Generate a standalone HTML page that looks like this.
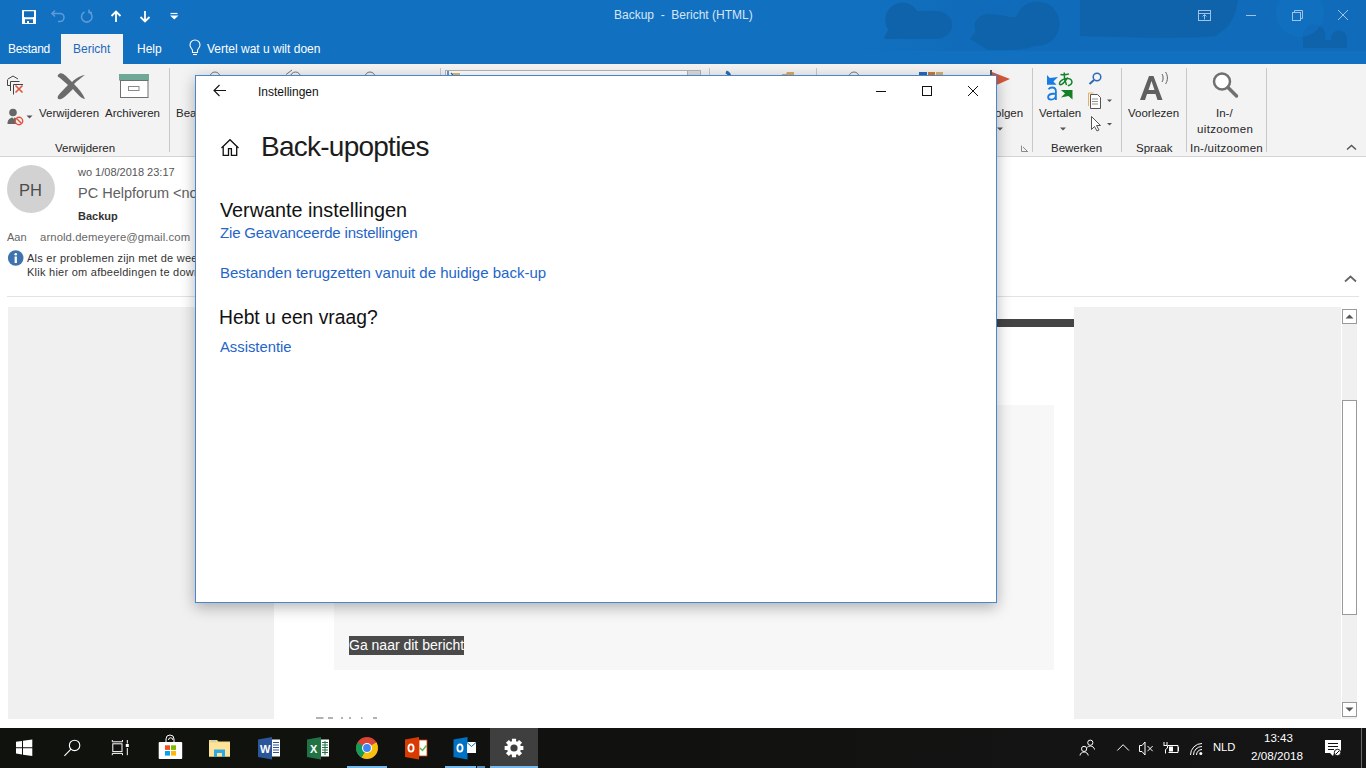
<!DOCTYPE html>
<html><head><meta charset="utf-8">
<style>
*{margin:0;padding:0;box-sizing:border-box}
html,body{width:1366px;height:768px;overflow:hidden;background:#fff;font-family:"Liberation Sans",sans-serif;position:relative}
.a{position:absolute;white-space:nowrap}
#title{left:0;top:0;width:1366px;height:64px;background:#1170c0}
#ribbon{left:0;top:64px;width:1366px;height:93px;background:#f3f3f3;border-bottom:1px solid #d5d5d5}
#hdr{left:0;top:157px;width:1366px;height:150px;background:#fff}
#body{left:8px;top:307px;width:1333px;height:412px;background:#f0f0f0}
#task{left:0;top:728px;width:1366px;height:40px;background:linear-gradient(90deg,#10120d 0%,#111210 50%,#151515 100%)}
#dlg{left:195px;top:75px;width:802px;height:528px;background:#fff;border:1px solid #4a86d0;box-shadow:0 4px 14px rgba(0,0,0,.3)}
.wt{color:#fff;font-size:12px}
.rt{color:#262626;font-size:12px}
</style></head><body>
<div id="title" class="a">
  <svg class="a" style="left:0;top:0" width="1366" height="64">
  <defs><linearGradient id="bandg" x1="0" x2="1"><stop offset="0" stop-color="#1170c0" stop-opacity="0"/><stop offset=".25" stop-color="#106cba" stop-opacity="1"/></linearGradient></defs>
  <rect x="820" y="0" width="546" height="51" fill="url(#bandg)"/>
  <g fill="#0f63ab">
   <circle cx="902.4" cy="19.8" r="17.2"/><ellipse cx="935.3" cy="25" rx="17" ry="14"/><path d="M902 11h33v28h-49l-2 -1 3-6z"/>
   <ellipse cx="988" cy="26.4" rx="13.5" ry="12.5"/><circle cx="1037.3" cy="23.7" r="22.3"/><path d="M988 15c8-1 14 0 22 2l27 0v28c-10 5-20 5-49 5l-18-11z"/>
   <path d="M1080 0h158c-2 14-6 22-12 28l-10 8c-30 3-70 2-136 0z"/>
   <circle cx="1314" cy="36" r="11.5"/><circle cx="1339" cy="38.5" r="8"/><path d="M1303 40h44v8h-44z"/>
  </g>
  <circle cx="1300" cy="13" r="24" fill="#1271c4" opacity=".6"/>
 </svg>
<svg class="a" style="left:0;top:0" width="200" height="30">
  <rect x="22" y="10" width="14" height="14" rx=".5" fill="#fff"/>
  <path d="M24 11.2h10v5l-1 1h-8l-1-1z" fill="#106cbc"/>
  <path d="M25 19.2h8V23h-4v-2h-2v2h-2z" fill="#106cbc"/>
  <g fill="none" stroke="#5b9bd8" stroke-width="1.6">
   <path d="M52 13.5h8a4 4 0 0 1 0 8h-2M55 10.5l-3 3 3 3"/>
   <path d="M89 12a5.3 5.3 0 1 1-4.5 0M89 9.5v3h3"/>
  </g>
  <g fill="none" stroke="#fff" stroke-width="1.8">
   <path d="M116 22V11.5M111.5 16l4.5-4.5 4.5 4.5"/>
   <path d="M145 11v10.5M140.5 17l4.5 4.5 4.5-4.5"/>
  </g>
  <path d="M170.5 13.5h7" stroke="#fff" stroke-width="1.2"/>
  <path d="M170 15.5h8.5l-4.25 4z" fill="#fff"/>
 </svg>
 <div class="a" style="left:614px;top:8px;font-size:12px;color:#d6e6f6">Backup&nbsp; -&nbsp; Bericht (HTML)</div>
 <svg class="a" style="left:1190px;top:0" width="176" height="32">
  <g fill="none" stroke="#9fc2e6" stroke-width="1">
   <rect x="8.5" y="10.5" width="12" height="10"/><path d="M8.5 13.5h12M14.5 19.5v-5M12.5 16.5l2-2 2 2"/>
   <path d="M56 15.5h10"/>
   <rect x="102.5" y="12.5" width="8" height="8"/><path d="M104.5 12.5v-2h8v8h-2"/>
   <path d="M148 10l10 10M158 10l-10 10"/>
  </g>
 </svg>
 <div class="a" style="left:61px;top:34px;width:62px;height:30px;background:#f3f3f3"></div>
 <div class="a wt" style="left:8px;top:42px;letter-spacing:-.3px">Bestand</div>
 <div class="a" style="left:73px;top:42px;font-size:12px;color:#1d69b8">Bericht</div>
 <div class="a wt" style="left:137px;top:42px">Help</div>
 <svg class="a" style="left:186px;top:39px" width="18" height="18"><g fill="none" stroke="#fff" stroke-width="1.1"><path d="M6.5 13.5v-2c0-1.5-2.5-3-2.5-5.5a5 5 0 0 1 10 0c0 2.5-2.5 4-2.5 5.5v2z"/><path d="M7 15.5h4"/></g></svg>
 <div class="a wt" style="left:207px;top:42px">Vertel wat u wilt doen</div>
</div>
<div id="ribbon" class="a">
 <svg class="a" style="left:0;top:0" width="1366" height="93">
  <g stroke="#c8c8c8" stroke-width="1"><path d="M169.5 4v84M440.5 4v12M709.5 4v12M816.5 4v12M1032.5 4v84M1121.5 4v84M1186.5 4v84M1266.5 4v84"/></g>
  <!-- ignore -->
  <g fill="none" stroke="#444" stroke-width="1"><path d="M7.5 15.5v6h3M8 15l5-3 5 3M10.5 27v-9.5h9M13.5 30.5v-10h9.5"/></g>
  <path d="M15.5 21.5l7 7M22.5 21.5l-7 7" stroke="#e0533c" stroke-width="1.6"/>
  <!-- junk -->
  <circle cx="13" cy="48.5" r="3.8" fill="#666"/>
  <path d="M7.5 60c0-4 2-6 5-6.5l1 1.5 1-1.5c2 .5 3 1 3.5 2l-1.5 4.5z" fill="#666"/>
  <circle cx="19" cy="57" r="3.7" fill="#f3f3f3" stroke="#e0533c" stroke-width="1.4"/>
  <path d="M16.5 54.5l5 5" stroke="#e0533c" stroke-width="1.4"/>
  <path d="M26.5 51.5h6l-3 3z" fill="#555"/>
  <!-- big X -->
  <path d="M58 11c2-3 5-2 8 1l6 6c4-4 10-7 13-7-3 2-8 6-11 9 5 5 9 10 11 15-3 0-7-4-12-10-5 5-9 9-12 10-3 1-4-1-3-3 2-3 6-7 10-11l-8-7c-2-1-3-2-2-3z" fill="#6b6b6b"/>
  <!-- archive -->
  <rect x="119" y="10" width="30" height="6.5" fill="#70a898"/>
  <rect x="120.5" y="16.5" width="27.5" height="17" fill="#fff" stroke="#707070" stroke-width="1"/>
  <rect x="128.5" y="22.5" width="10.5" height="4" fill="none" stroke="#8a8a8a" stroke-width="1"/>
  <!-- top strip hints -->
  <path d="M210 13a5 5 0 0 1 10 0M290.5 13a5 5 0 0 1 10 0M286 10.5l6-4.5M365 13a5 5 0 0 1 10 0M571 12a4 4 0 0 1 8 0M849 13a5 5 0 0 1 10 0" fill="none" stroke="#777" stroke-width="1"/>
  <rect x="445.5" y="6.5" width="242" height="10" fill="#fff" stroke="#b4b4b4"/>
  <rect x="687.5" y="6.5" width="13" height="10" fill="#dcdcdc" stroke="#b4b4b4"/>
  <path d="M448 7v5M451 9l3 3" stroke="#2a6ab8" stroke-width="1.4"/><rect x="453" y="9" width="7" height="5" fill="#e8b860"/>
  <path d="M726 8c3 1 4 3 4 6" stroke="#2a6ab8" stroke-width="3" fill="none"/>
  <rect x="749" y="12" width="10" height="4" fill="#e8b860"/>
  <path d="M782 10h4l1-2h7v8h-12z" fill="#dca860"/>
  <rect x="919" y="8" width="8" height="6" fill="#2a6ab8"/><rect x="928" y="8" width="7" height="6" fill="#d07a30"/><rect x="936" y="8" width="7" height="6" fill="#d6b070"/>
  <!-- flag -->
  <path d="M992 8l18 7-18 8z" fill="#d2593a"/>
  <rect x="990" y="6" width="2" height="6" fill="#555"/>
  <path d="M997 63.5h6l-3 3z" fill="#555"/>
  <path d="M1021.5 81.5v6h6M1023 83l5 5" fill="none" stroke="#8a8a8a" stroke-width="1"/>
  <!-- translate -->
  <path d="M1047 11l2.8 3 8.2-.9-4.6 4.4 3.2 3.2H1047z" fill="#1a7be0"/>
  <path d="M1048.5 25.3c1-1.3 2.3-1.8 3.6-1.8 2.5 0 3.8 1.3 3.8 3.8v8.6M1055.9 29.5c-4.5 0-7.8.8-7.8 3.5 0 1.6 1.2 2.6 3 2.6 2.5 0 4.8-1.8 4.8-4.5" fill="none" stroke="#1a7be0" stroke-width="1.8"/>
  <g fill="none" stroke="#138028" stroke-width="1.5"><path d="M1060.5 10.5c3 .4 6 .2 8.5-.6M1064.2 8.5c-.2 4 .5 8.5 2.3 12.5"/><path d="M1067.7 13.5c-2.5 3.8-5.3 7.2-7.2 7.2-1.5 0-1.3-2.5.7-4 2.5-2 6.5-2.8 9-1.5 2 1 2.3 3.5.8 5-.8.8-2 1.3-3.2 1.6"/></g>
  <path d="M1061 26h11.5v9.5l-4-3.5-7.5 1.5 4-4z" fill="#138028"/>
  <path d="M1060 63.5h6l-3 3z" fill="#555"/>
  <!-- small icons -->
  <circle cx="1097" cy="13" r="3.8" fill="none" stroke="#2a6ab8" stroke-width="1.5"/>
  <path d="M1094 16l-4.5 4" stroke="#2a6ab8" stroke-width="2"/>
  <path d="M1088.5 42v-13h5" fill="none" stroke="#e8b060" stroke-width="1"/>
  <path d="M1090.5 44.5v-14h7l3 3v11z" fill="#fff" stroke="#555" stroke-width="1"/>
  <path d="M1092 35h6M1092 37.5h6M1092 40h6" stroke="#777" stroke-width=".8"/>
  <path d="M1107 35.5h5l-2.5 2.5z" fill="#555"/>
  <path d="M1091.5 52.5v13l3-3 2.5 4.5 2-1-2.5-4.5h4z" fill="#fff" stroke="#555" stroke-width="1"/>
  <path d="M1107 59h5l-2.5 2.5z" fill="#555"/>
  <!-- A -->
  <path d="M1140 36l9-24h4.5l9 24h-5l-2-6h-8.5l-2 6zM1148.5 26h6l-3-9z" fill="#606060" fill-rule="evenodd"/>
  <path d="M1162 10c1.5 2 1.5 6 0 8M1165.5 8c2.5 3 2.5 9 0 12" fill="none" stroke="#606060" stroke-width="1"/>
  <!-- zoom -->
  <circle cx="1222" cy="17.5" r="8" fill="#fff" stroke="#707070" stroke-width="2.5"/>
  <path d="M1228 23.5l8.5 8.5" stroke="#707070" stroke-width="3.5" stroke-linecap="round"/>
  <path d="M1347 85.5l4.5-4 4.5 4" fill="none" stroke="#555" stroke-width="1.5"/>
 </svg>
 <div class="a rt" style="left:39px;top:43px;font-size:11.5px">Verwijderen</div>
 <div class="a rt" style="left:105px;top:43px;font-size:11.5px">Archiveren</div>
 <div class="a rt" style="left:176px;top:43px;font-size:11.5px">Bea</div>
 <div class="a rt" style="left:55px;top:78px;font-size:11.5px">Verwijderen</div>
 <div class="a rt" style="left:995px;top:43px;font-size:11.5px">olgen</div>
 <div class="a rt" style="left:1039px;top:43px;font-size:11.5px">Vertalen</div>
 <div class="a rt" style="left:1051px;top:78px;font-size:11.5px">Bewerken</div>
 <div class="a rt" style="left:1128px;top:43px;font-size:11.5px">Voorlezen</div>
 <div class="a rt" style="left:1136px;top:78px;font-size:11.5px">Spraak</div>
 <div class="a rt" style="left:1216px;top:43px;font-size:11.5px">In-/</div>
 <div class="a rt" style="left:1197px;top:59px;font-size:11.5px;letter-spacing:.35px">uitzoomen</div>
 <div class="a rt" style="left:1190px;top:78px;font-size:11.5px;letter-spacing:.25px">In-/uitzoomen</div>
</div>
<div id="hdr" class="a">
 <div class="a" style="left:7px;top:8px;width:48px;height:48px;border-radius:50%;background:#d2d2d2"></div>
 <div class="a" style="left:19px;top:24px;font-size:16.5px;color:#4c4c4c">PH</div>
 <div class="a" style="left:78px;top:9px;font-size:11px;color:#555">wo 1/08/2018 23:17</div>
 <div class="a" style="left:78px;top:28px;font-size:14.5px;color:#606060">PC Helpforum &lt;no</div>
 <div class="a" style="left:78px;top:53px;font-size:11px;color:#333;font-weight:bold">Backup</div>
 <div class="a" style="left:7px;top:74px;font-size:11px;color:#666">Aan</div>
 <div class="a" style="left:40px;top:74px;font-size:11.3px;color:#666;letter-spacing:.1px">arnold.demeyere@gmail.com</div>
 <svg class="a" style="left:7px;top:93px" width="18" height="18"><circle cx="8.7" cy="8" r="7.8" fill="#3f73ad"/><rect x="7.6" y="6.5" width="2.3" height="6.5" fill="#fff"/><circle cx="8.75" cy="4.2" r="1.3" fill="#fff"/></svg>
 <div class="a" style="left:27px;top:94px;font-size:11px;color:#333;line-height:14px;letter-spacing:.25px">Als er problemen zijn met de weergave van dit bericht<br>Klik hier om afbeeldingen te downloaden</div>
 <div class="a" style="left:7px;top:139px;width:1352px;height:1px;background:#e3e3e3"></div>
 <svg class="a" style="left:1340px;top:116px" width="20" height="14"><path d="M5 8.5l5.5-5 5.5 5" fill="none" stroke="#666" stroke-width="1.7"/></svg>
</div>
<div id="body" class="a">
 <div class="a" style="left:266px;top:0;width:800px;height:412px;background:#fff"></div>
 <div class="a" style="left:266px;top:12px;width:800px;height:8px;background:#444"></div>
 <div class="a" style="left:326px;top:98px;width:720px;height:265px;background:#f7f7f7"></div>
 <div class="a" style="left:341px;top:329px;width:115px;height:19px;background:#4a4a4a"></div>
 <div class="a" style="left:341px;top:330px;font-size:14px;color:#fff">Ga naar dit bericht</div>
 <svg class="a" style="left:300px;top:410px" width="100" height="3"><path d="M316 1.5h7.5M328 1.5h5M341 1.5h2M349 1.5h2M361 1.5h1.5M373 1.5h4" transform="translate(-308 -.5)" stroke="#666" stroke-width="1.2"/></svg>
</div>
<div class="a" style="left:1341px;top:307px;width:1px;height:412px;background:#fff"></div>
<div class="a" style="left:1342px;top:324px;width:15px;height:395px;background:#f0f0f0"></div>
<div class="a" style="left:1342px;top:309px;width:15px;height:15px;background:#fff;border:1px solid #9a9a9a"></div>
<svg class="a" style="left:1342px;top:309px" width="15" height="15"><path d="M3.5 9.5h8l-4-4z" fill="#555"/></svg>
<div class="a" style="left:1342px;top:400px;width:15px;height:215px;background:#fff;border:1px solid #9a9a9a"></div>
<div class="a" style="left:1342px;top:702px;width:15px;height:15px;background:#fff;border:1px solid #9a9a9a"></div>
<svg class="a" style="left:1342px;top:702px" width="15" height="15"><path d="M3.5 5.5h8l-4 4z" fill="#555"/></svg>
<div id="task" class="a">
 <div class="a" style="left:490px;top:0;width:48px;height:40px;background:#3f3f3f"></div>
 <div class="a" style="left:347px;top:38px;width:40px;height:2px;background:#76b9ed"></div>
 <div class="a" style="left:445px;top:38px;width:31px;height:2px;background:#76b9ed"></div>
 <div class="a" style="left:477px;top:38px;width:8px;height:2px;background:#5a8cb8"></div>
 <div class="a" style="left:490px;top:38px;width:48px;height:2px;background:#76b9ed"></div>
 <svg class="a" style="left:0;top:0" width="1366" height="40">
  <!-- windows -->
  <path d="M16 13.8l6-.9v6.3h-6zM23 12.7l9.3-1.3v7.8H23zM16 20.2h6v6.3l-6-.9zM23 20.2h9.3v7.8L23 26.7z" fill="#fff"/>
  <!-- search -->
  <circle cx="74.6" cy="17.4" r="5.2" fill="none" stroke="#fff" stroke-width="1.1"/>
  <path d="M71 21.2l-6.6 6.6" stroke="#fff" stroke-width="1.1"/>
  <!-- task view -->
  <path d="M112.3 12v1.8h10.2V12M112.3 27.2v-1.8h10.2v1.8M127.3 12v3.5M127.3 20v7.2" fill="none" stroke="#fff" stroke-width="1"/>
  <rect x="112.8" y="15.8" width="9.2" height="7.8" fill="none" stroke="#fff" stroke-width="1"/>
  <rect x="125.8" y="16" width="3" height="3" fill="#fff"/>
  <!-- store -->
  <path d="M166 14v-3a4 4 0 0 1 8 0v3M168.5 12a2.2 2.2 0 0 1 4.4 0" fill="none" stroke="#fff" stroke-width="1"/>
  <rect x="158.7" y="14" width="23.5" height="17" rx="1" fill="#fff"/>
  <rect x="165" y="17.3" width="5" height="4.6" fill="#f25022"/><rect x="171" y="17.3" width="5" height="4.6" fill="#7fba00"/>
  <rect x="165" y="23" width="5" height="4.6" fill="#00a4ef"/><rect x="171" y="23" width="5" height="4.6" fill="#ffb900"/>
  <!-- folder -->
  <path d="M209 12h8l1.5 1.5H230V28.5H209z" fill="#f6d57a"/>
  <rect x="209" y="14.5" width="21" height="14" fill="#fde49a"/>
  <path d="M211 13h5" stroke="#9ad0ef" stroke-width="1"/>
  <path d="M214 29v-7.5h11V29h-3v-4h-5v4z" fill="#2ea8e0"/>
  <!-- word -->
  <path d="M258 11.5l14-2.5v22.5l-14-2.5z" fill="#2b579a"/>
  <rect x="272" y="11.5" width="8" height="17" fill="#fff"/>
  <path d="M273 14.5h6M273 17h6M273 19.5h6M273 22h6M273 24.5h6" stroke="#2b579a" stroke-width="1"/>
  <text x="260" y="25" font-family="Liberation Sans" font-weight="bold" font-size="11" fill="#fff">W</text>
  <!-- excel -->
  <path d="M307 11.5l14-2.5v22.5l-14-2.5z" fill="#217346"/>
  <rect x="321" y="11.5" width="8" height="17" fill="#fff"/>
  <path d="M322 14.5h6M322 17h6M322 19.5h6M322 22h6M322 24.5h6M325 13v14" stroke="#217346" stroke-width="1"/>
  <text x="310" y="25" font-family="Liberation Sans" font-weight="bold" font-size="11" fill="#fff">X</text>
  <!-- chrome -->
  <circle cx="367" cy="20" r="11" fill="#db4437"/>
  <path d="M367 20L376.5 14.5A11 11 0 0 1 361.5 29.5z" fill="#f4c20d"/>
  <path d="M367 20L361.5 29.5A11 11 0 0 1 357.5 14.5z" fill="#0f9d58"/>
  <path d="M367 20h9.5A11 11 0 0 0 376.5 14.5z" fill="#f4c20d"/>
  <circle cx="367" cy="20" r="5" fill="#fff"/>
  <circle cx="367" cy="20" r="3.9" fill="#4285f4"/>
  <!-- office -->
  <path d="M405 11.5l14-2.5v22.5l-14-2.5z" fill="#d83b01"/>
  <rect x="419" y="12" width="8" height="16" fill="#fff" stroke="#d83b01" stroke-width=".8"/>
  <path d="M420 20l2.5 2.5 4-5" fill="none" stroke="#5bb848" stroke-width="1.4"/>
  <ellipse cx="411" cy="20" rx="2.6" ry="3.6" fill="none" stroke="#fff" stroke-width="1.8"/>
  <!-- outlook -->
  <path d="M453.5 11.5l14-2.5v22.5l-14-2.5z" fill="#0072c6"/>
  <rect x="467" y="14" width="9" height="11" fill="#fff"/>
  <path d="M467 14.5l4.5 4 4.5-4" fill="none" stroke="#0072c6" stroke-width="1"/>
  <ellipse cx="460" cy="20" rx="2.6" ry="3.6" fill="none" stroke="#fff" stroke-width="1.8"/>
  <!-- gear -->
  <g transform="translate(514 20)">
   <path d="M6.69 -2.07 L9.37 -2.10 L9.37 2.10 L6.69 2.07 L6.19 3.27 L8.11 5.14 L5.14 8.11 L3.27 6.19 L2.07 6.69 L2.10 9.37 L-2.10 9.37 L-2.07 6.69 L-3.27 6.19 L-5.14 8.11 L-8.11 5.14 L-6.19 3.27 L-6.69 2.07 L-9.37 2.10 L-9.37 -2.10 L-6.69 -2.07 L-6.19 -3.27 L-8.11 -5.14 L-5.14 -8.11 L-3.27 -6.19 L-2.07 -6.69 L-2.10 -9.37 L2.10 -9.37 L2.07 -6.69 L3.27 -6.19 L5.14 -8.11 L8.11 -5.14 L6.19 -3.27Z" fill="#fff"/>
   <circle r="3.6" fill="#3f3f3f"/>
  </g>
  <!-- tray -->
  <g fill="none" stroke="#fff" stroke-width="1">
   <circle cx="1090.3" cy="14.7" r="2.6"/><path d="M1087.2 19.3c.8-.8 1.9-1.3 3.1-1.3 2.5 0 4 1.8 4.2 3.5"/>
   <circle cx="1084.1" cy="20.9" r="2.6"/><path d="M1080 27.5c.3-2 1.8-3.5 4.1-3.5s3.8 1.5 4.1 3.5"/>
   <path d="M1117.3 22.5l5.8-5.8 5.8 5.8"/>
   <path d="M1139.5 17.5h2.5l3-3.5v13l-3-3.5h-2.5z"/><path d="M1147.5 18l5.2 5.2M1152.7 18l-5.2 5.2"/>
   <path d="M1164 14v3M1167 14v3M1163.5 17.5h4v2.5l-2 1.5v4"/><path d="M1168 17.5h10v7h-9.5M1178.5 19v4"/>
   <path d="M1190.5 27a11.5 11.5 0 0 1 11.5-11.5M1193.5 27a8.5 8.5 0 0 1 8.5-8.5M1196.5 27a5.5 5.5 0 0 1 5.5-5.5"/>
  </g>
  <rect x="1169" y="18.5" width="4" height="5" fill="#fff"/>
  <circle cx="1200.8" cy="25.5" r="1.5" fill="#fff"/>
  <path d="M1325 12h16v13h-7l-1 3-3-3h-5z" fill="#fff"/>
  <path d="M1328 15.5h10M1328 18.5h10M1328 21.5h6" stroke="#111" stroke-width="1"/>
  <circle cx="1337.5" cy="24.5" r="3.2" fill="#fff" stroke="#111" stroke-width="1"/><path d="M1336 26l3-3" stroke="#111" stroke-width="1"/>
  <path d="M1361.5 0v40" stroke="#6a6a6a" stroke-width="1"/>
 </svg>
 <div class="a" style="left:1213px;top:13px;font-size:11.2px;color:#fff">NLD</div>
 <div class="a" style="left:1264px;top:4px;font-size:11.5px;color:#fff">13:43</div>
 <div class="a" style="left:1251px;top:21px;font-size:11.7px;color:#fff">2/08/2018</div>
</div>
<div id="dlg" class="a">
 <svg class="a" style="left:-196px;top:-76px" width="1000" height="200">
  <path d="M214 90.5h12M219.5 85l-5.5 5.5 5.5 5.5" fill="none" stroke="#111" stroke-width="1.1"/>
  <path d="M876 91.5h10" stroke="#111" stroke-width="1"/>
  <rect x="922.5" y="86.5" width="9" height="9" fill="none" stroke="#111" stroke-width="1"/>
  <path d="M968 86l10 10M978 86l-10 10" stroke="#111" stroke-width="1"/>
  <path d="M221.5 148l8.5-8.3 8.5 8.3" fill="none" stroke="#111" stroke-width="1.3"/>
  <path d="M223.2 146.5v8.8h5.3v-6.6h2.9v6.6h5.3v-8.8" fill="none" stroke="#111" stroke-width="1.3"/>
 </svg>
 <div class="a" style="left:62px;top:9px;font-size:12px;color:#111">Instellingen</div>
 <div class="a" style="left:65px;top:55px;font-size:28px;color:#1c1c1c;letter-spacing:-.75px">Back-upopties</div>
 <div class="a" style="left:24px;top:123px;font-size:19.8px;color:#111">Verwante instellingen</div>
 <div class="a" style="left:24px;top:148px;font-size:15px;letter-spacing:-.18px;color:#2465c8">Zie Geavanceerde instellingen</div>
 <div class="a" style="left:24px;top:188px;font-size:15px;color:#2465c8">Bestanden terugzetten vanuit de huidige back-up</div>
 <div class="a" style="left:23px;top:231px;font-size:19.3px;color:#111">Hebt u een vraag?</div>
 <div class="a" style="left:24px;top:263px;font-size:14.8px;color:#2465c8">Assistentie</div>
</div>
</body></html>
